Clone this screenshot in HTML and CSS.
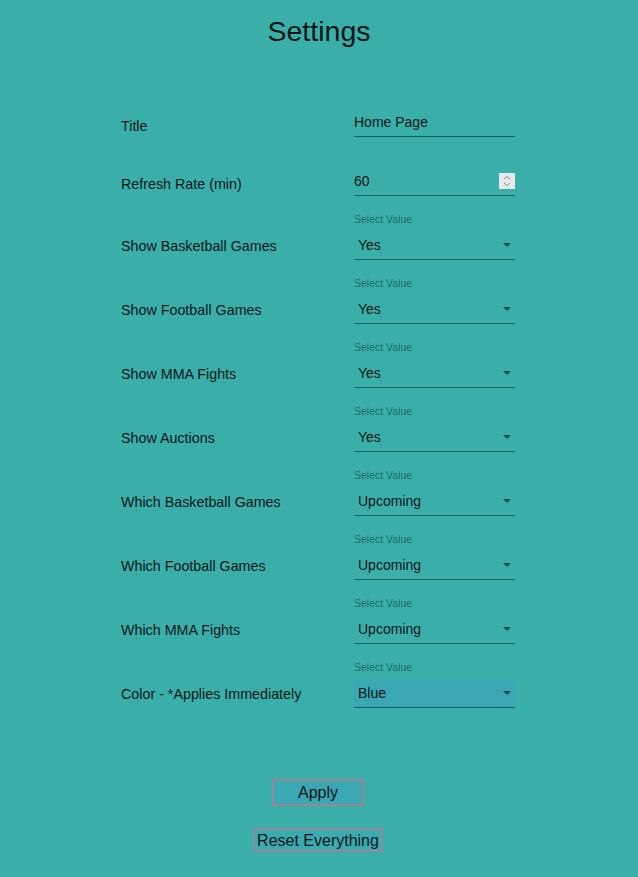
FILE: index.html
```html
<!DOCTYPE html>
<html>
<head>
<meta charset="utf-8">
<link rel="stylesheet" href="styles.css">
</head>
<body>
<h1 class="page-title">Settings</h1>
<div class="form">
  <div class="row row-title">
    <div class="label lbl-title">Title</div>
    <div class="input"><span class="input-text">Home Page</span></div>
  </div>
  <div class="row">
    <div class="label lbl-refresh">Refresh Rate (min)</div>
    <div class="input"><span class="input-text">60</span>
      <span class="spinner"><svg width="16" height="16" viewBox="0 0 16 16"><path d="M5 6 L8 3.5 L11 6" fill="none" stroke="#8a8a90" stroke-width="1"/><path d="M5 10 L8 12.5 L11 10" fill="none" stroke="#8a8a90" stroke-width="1"/></svg></span>
    </div>
  </div>
  <div class="row">
    <div class="label">Show Basketball Games</div>
    <div class="field"><div class="field-label">Select Value</div><div class="select"><span>Yes</span><span class="arrow"></span></div></div>
  </div>
  <div class="row">
    <div class="label">Show Football Games</div>
    <div class="field"><div class="field-label">Select Value</div><div class="select"><span>Yes</span><span class="arrow"></span></div></div>
  </div>
  <div class="row">
    <div class="label">Show MMA Fights</div>
    <div class="field"><div class="field-label">Select Value</div><div class="select"><span>Yes</span><span class="arrow"></span></div></div>
  </div>
  <div class="row">
    <div class="label">Show Auctions</div>
    <div class="field"><div class="field-label">Select Value</div><div class="select"><span>Yes</span><span class="arrow"></span></div></div>
  </div>
  <div class="row">
    <div class="label">Which Basketball Games</div>
    <div class="field"><div class="field-label">Select Value</div><div class="select"><span>Upcoming</span><span class="arrow"></span></div></div>
  </div>
  <div class="row">
    <div class="label">Which Football Games</div>
    <div class="field"><div class="field-label">Select Value</div><div class="select"><span>Upcoming</span><span class="arrow"></span></div></div>
  </div>
  <div class="row">
    <div class="label">Which MMA Fights</div>
    <div class="field"><div class="field-label">Select Value</div><div class="select"><span>Upcoming</span><span class="arrow"></span></div></div>
  </div>
  <div class="row">
    <div class="label">Color - *Applies Immediately</div>
    <div class="field"><div class="field-label">Select Value</div><div class="select select-focused"><span>Blue</span><span class="arrow"></span></div></div>
  </div>
</div>
<div class="actions">
  <button class="btn btn-apply">Apply</button>
  <button class="btn btn-reset">Reset Everything</button>
</div>
</body>
</html>
```
FILE: styles.css
```css
html, body {
  margin: 0;
  padding: 0;
  background: #3aafa9;
  font-family: "Liberation Sans", Arial, sans-serif;
  color: #0b1517;
}
.page-title {
  margin: 15px 0 0;
  font-size: 28.5px;
  font-weight: normal;
  line-height: 32px;
  text-align: center;
  color: #0a1416;
}
.form {
  width: 394px;
  margin: 65px 0 0 121px;
  display: flex;
  flex-direction: column;
  gap: 13px;
}
.row {
  display: grid;
  grid-template-columns: 233px 161px;
  align-items: end;
}
.row-title {
  margin-bottom: 21px;
}
.label {
  font-size: 14.3px;
  line-height: 16px;
  padding-bottom: 6px;
}
.lbl-title { padding-bottom: 3px; }
.lbl-refresh { padding-bottom: 4px; }
.input {
  display: flex;
  align-items: center;
  justify-content: space-between;
  padding: 2px 0 6px;
  border-bottom: 1px solid rgba(0, 0, 0, 0.45);
  font-size: 14px;
  line-height: 16px;
}
.spinner {
  width: 16px;
  height: 16px;
  background: #e9e9ed;
  display: flex;
}
.field {
  display: flex;
  flex-direction: column;
  padding-top: 3px;
}
.field-label {
  font-size: 10.5px;
  line-height: 14px;
  color: rgba(0, 0, 0, 0.45);
  margin-bottom: 6px;
}
.select {
  height: 28px;
  box-sizing: border-box;
  padding: 0 4px 1px 4px;
  display: flex;
  align-items: center;
  justify-content: space-between;
  font-size: 14px;
  line-height: 16px;
  border-bottom: 1px solid rgba(0, 0, 0, 0.45);
}
.select-focused {
  background: #3aa7b2;
}
.arrow {
  width: 0;
  height: 0;
  border-left: 4px solid transparent;
  border-right: 4px solid transparent;
  border-top: 4px solid rgba(0, 0, 0, 0.55);
}
.actions {
  display: flex;
  flex-direction: column;
  align-items: center;
  margin-top: 71px;
  padding-right: 2px;
  gap: 22px;
}
.btn {
  box-sizing: border-box;
  display: block;
  font-family: "Liberation Sans", Arial, sans-serif;
  font-size: 16px;
  color: #0a1416;
  background: #3aa7b2;
  border: 2px solid #98869a;
  margin: 0;
  padding: 0;
  text-align: center;
}
.btn-apply {
  width: 92px;
  height: 27px;
  line-height: 22px;
}
.btn-reset {
  width: 130px;
  height: 24px;
  line-height: 19px;
  background: #3aabb0;
}
```
